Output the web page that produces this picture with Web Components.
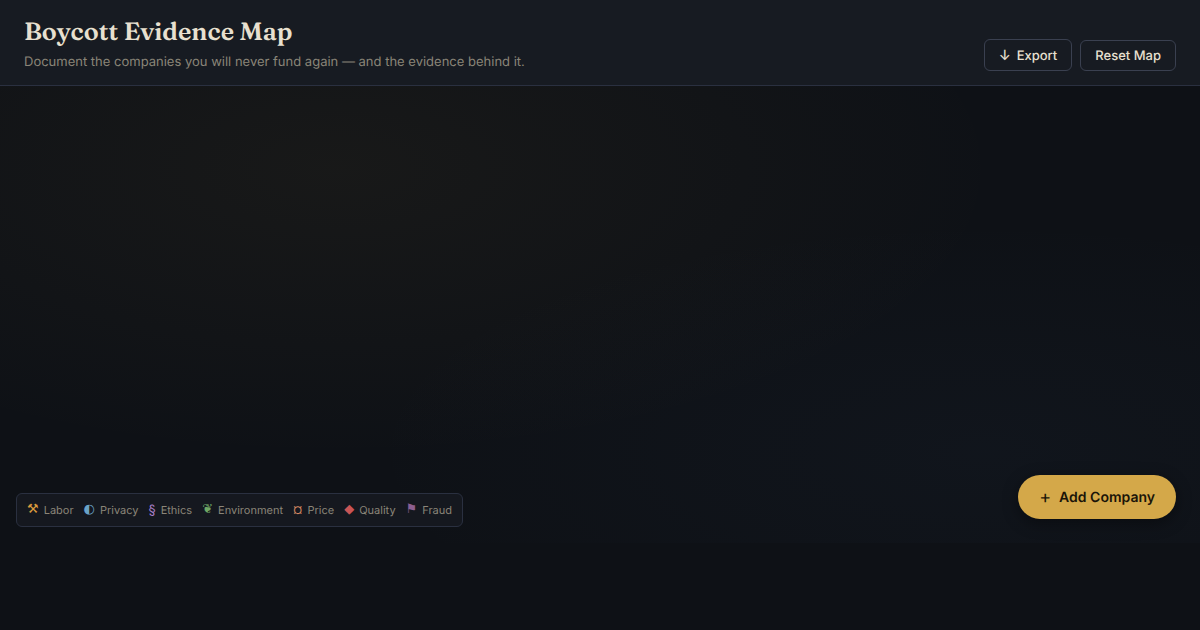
<!DOCTYPE html>
<html lang="en">
<head>
<meta charset="UTF-8">
<meta name="viewport" content="width=device-width, initial-scale=1.0">
<title>Boycott Evidence Map</title>
<style>
    :root {
        --ink: #e8e0d0;
        --muted: #8a8578;
        --line: #2a3040;
        --gold: #d4a849;
    }
    body {
        margin: 0;
        background: #0e1116;
        color: var(--ink);
        font-family: "Inter", sans-serif;
        text-rendering: geometricPrecision;
    }
</style>
</head>
<body>
<evidence-app></evidence-app>

<script>
class PageHeader extends HTMLElement {
    constructor() {
        super();
        this.attachShadow({ mode: "open" }).innerHTML = this.markup;
    }

    markup = /*html*/`
        <style>
            :host {
                display: block;
                background: #171b22;
                border-bottom: 1px solid var(--line);
            }
            header {
                display: flex;
                align-items: flex-end;
                justify-content: space-between;
                flex-wrap: wrap;
                gap: 12px;
                padding: 16px 24px 14px;
            }
            h1 {
                margin: 0;
                font-family: "Fraunces", "Liberation Serif", serif;
                font-size: 25px;
                font-weight: 600;
                line-height: 32px;
            }
            p {
                margin: 4px 0 -1px;
                color: var(--muted);
                font-size: 13px;
                line-height: 20px;
            }
            .actions {
                display: flex;
                align-items: flex-end;
                gap: 8px;
            }
        </style>
        <header>
            <div>
                <h1><slot name="title"></slot></h1>
                <p><slot name="tagline"></slot></p>
            </div>
            <div class="actions"><slot></slot></div>
        </header>
    `;
}

class MapButton extends HTMLElement {
    constructor() {
        super();
        this.attachShadow({ mode: "open" }).innerHTML = this.markup;
    }

    markup = /*html*/`
        <style>
            :host {
                display: block;
            }
            button {
                display: flex;
                align-items: center;
                gap: 6px;
                padding: 8px 14px 6px;
                background: none;
                border: 1px solid #3a4050;
                border-radius: 6px;
                color: inherit;
                font: 500 13px/15px "Inter", sans-serif;
                text-rendering: inherit;
                cursor: pointer;
            }
            button:hover {
                border-color: var(--gold);
            }
            ::slotted(span) {
                font-size: 14px;
                line-height: 16px;
            }
            :host([primary]) button {
                gap: 8px;
                padding: 13px 21px 11px;
                background: var(--gold);
                border: none;
                border-radius: 22px;
                color: #1a1408;
                font: 600 14px/20px "Inter", sans-serif;
                box-shadow: 0 4px 16px rgba(0, 0, 0, 0.4);
            }
            :host([primary]) ::slotted(span) {
                font-size: 18px;
                font-weight: 400;
                line-height: 20px;
            }
        </style>
        <button type="button"><slot name="icon"></slot><slot></slot></button>
    `;
}

class LegendItem extends HTMLElement {
    constructor() {
        super();
        this.attachShadow({ mode: "open" }).innerHTML = this.markup;
    }

    markup = /*html*/`
        <style>
            :host {
                display: flex;
                align-items: center;
                gap: 5px;
                color: var(--muted);
                font-size: 11px;
                line-height: 18px;
            }
            ::slotted(span) {
                color: var(--tone);
                font-size: 13px;
            }
            :host([shape]) ::slotted(span) {
                font-family: "DejaVu Sans", sans-serif;
            }
        </style>
        <slot name="icon"></slot><slot></slot>
    `;
}

class EvidenceMap extends HTMLElement {
    constructor() {
        super();
        this.attachShadow({ mode: "open" }).innerHTML = this.markup;
    }

    markup = /*html*/`
        <style>
            :host {
                display: flex;
                align-items: flex-end;
                justify-content: space-between;
                gap: 16px;
                box-sizing: border-box;
                padding: 16px 24px 24px 16px;
                background:
                    radial-gradient(ellipse at 28% 18%, rgba(212, 168, 73, 0.05), transparent 55%),
                    radial-gradient(ellipse at 82% 80%, rgba(80, 120, 180, 0.04), transparent 45%);
            }
            .legend {
                display: flex;
                flex-wrap: wrap;
                gap: 4px 10px;
                margin-bottom: -8px;
                padding: 7px 10px;
                background: #15181f;
                border: 1px solid var(--line);
                border-radius: 6px;
            }
        </style>
        <div class="legend"><slot></slot></div>
        <slot name="action"></slot>
    `;
}

class EvidenceApp extends HTMLElement {
    constructor() {
        super();
        this.attachShadow({ mode: "open" }).innerHTML = this.markup;
    }

    categories = [
        ["⚒", "Labor", "#d99a3d", "shape"],
        ["◐", "Privacy", "#6ba3c7", "shape"],
        ["§", "Ethics", "#a97fc9", ""],
        ["❦", "Environment", "#6fa765", "shape"],
        ["¤", "Price", "#d08560", ""],
        ["◆", "Quality", "#c95555", "shape"],
        ["⚑", "Fraud", "#8c5f91", "shape"]
    ];

    get markup() {
        const items = this.categories.map(([icon, name, tone, kind]) => `
            <legend-item ${kind} style="--tone: ${tone}"><span slot="icon" aria-hidden="true">${icon}</span>${name}</legend-item>
        `).join("");

        return /*html*/`
            <style>
                :host {
                    display: flex;
                    flex-direction: column;
                    box-sizing: border-box;
                    min-height: 100vh;
                    padding-bottom: 87px;
                }
                evidence-map {
                    flex: 1;
                }
            </style>
            <page-header>
                <span slot="title">Boycott Evidence Map</span>
                <span slot="tagline">Document the companies you will never fund again — and the evidence behind it.</span>
                <map-button><span slot="icon">↓</span>Export</map-button>
                <map-button>Reset Map</map-button>
            </page-header>
            <evidence-map>
                ${items}
                <map-button slot="action" primary><span slot="icon">+</span>Add Company</map-button>
            </evidence-map>
        `;
    }
}

customElements.define("page-header", PageHeader);
customElements.define("map-button", MapButton);
customElements.define("legend-item", LegendItem);
customElements.define("evidence-map", EvidenceMap);
customElements.define("evidence-app", EvidenceApp);
</script>
</body>
</html>
